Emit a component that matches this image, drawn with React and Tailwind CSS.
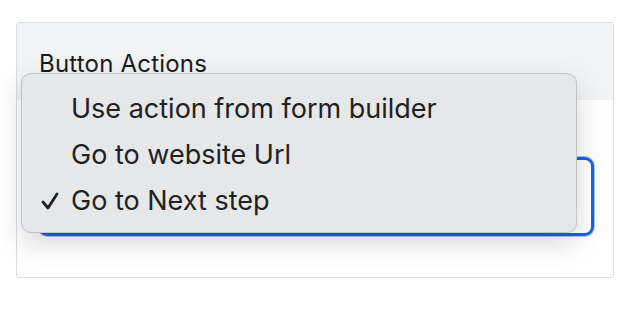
import React from 'react';

const items = ['Use action from form builder', 'Go to website Url', 'Go to Next step'];

const App = () => {
    return (
        <div className="w-[622px] h-[334px] bg-white pt-[22px] pl-4" style={{ fontFamily: 'Inter, "Liberation Sans", sans-serif' }}>
            <div className="relative w-[598px] h-[256px] border border-[#d9dce1] rounded-[3px] bg-white">
                {/* Header */}
                <div className="h-[77px] bg-[#f2f3f5] pl-[22px] pt-[27px]">
                    <h2 className="text-[24px] leading-[28px] tracking-[0.2px] text-[#1b1b1b]">Button Actions</h2>
                </div>

                {/* Select */}
                <div className="pt-[57px] pl-[21px]">
                    <div className="w-[556px] h-[79px] rounded-[9px] border-[3px] border-[#1b62dc] shadow-[0_0_0_1px_rgba(80,150,240,0.5)]"></div>
                </div>

                {/* Open menu */}
                <div className="absolute left-[4px] top-[50px] w-[556px] h-[160px] rounded-[10px] border border-[#c3c3c5] bg-[#e6e7e9] shadow-[0_10px_28px_rgba(0,0,0,0.16)] pt-[12px]">
                    <ul>
                        {items.map((item, i) => (
                            <li key={item} className="relative h-[46px] flex items-center pl-[49px] text-[27px] text-[#212121]">
                                {i === 2 && (
                                    <svg className="absolute left-[19px] top-[14px]" width="18" height="18" viewBox="0 0 18 18">
                                        <polyline points="2,10 7,16 16,2" fill="none" stroke="#212121" strokeWidth="2.8" strokeLinecap="round" strokeLinejoin="round" />
                                    </svg>
                                )}
                                {item}
                            </li>
                        ))}
                    </ul>
                </div>
            </div>
        </div>
    );
};

export default App;
